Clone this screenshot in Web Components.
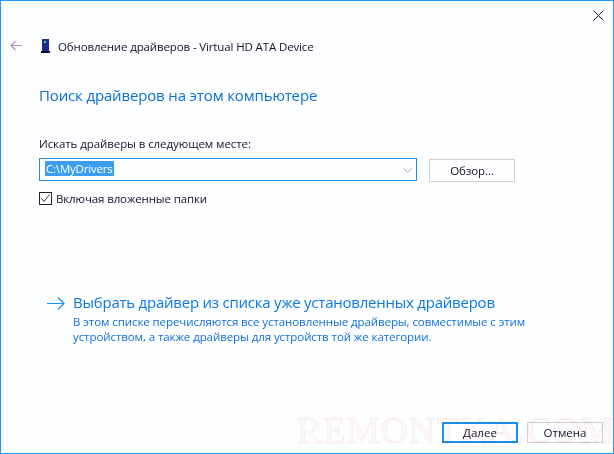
<!DOCTYPE html>
<html>
<head>
<meta charset="utf-8">
<style>
    html, body { margin: 0; padding: 0; }
    body { width: 614px; height: 454px; overflow: hidden; font-family: "Open Sans", "Noto Sans", sans-serif; }
</style>
</head>
<body>
<wizard-window>
    <wizard-header slot="header">Обновление драйверов - Virtual HD ATA Device</wizard-header>
    <h-title slot="content">Поиск драйверов на этом компьютере</h-title>
    <path-picker slot="content" label="Искать драйверы в следующем месте:" value="C:\MyDrivers" check="Включая вложенные папки"></path-picker>
    <command-link slot="content" title="Выбрать драйвер из списка уже установленных драйверов">В этом списке перечисляются все установленные драйверы, совместимые с этим<br>устройством, а также драйверы для устройств той же категории.</command-link>
    <win-button slot="footer" primary>Далее</win-button>
    <win-button slot="footer">Отмена</win-button>
</wizard-window>
<script>
class WizardWindow extends HTMLElement {
    constructor() {
        super()
        this.attachShadow({mode: 'open'}).innerHTML = `
            <style>
                :host {
                    display: flex;
                    flex-direction: column;
                    box-sizing: border-box;
                    position: relative;
                    width: 614px;
                    height: 454px;
                    background: #fcfeff;
                    border: 1px solid #1b9cf2;
                    color: #1a0f2e;
                    overflow: hidden;
                }
                .close { display: flex; justify-content: flex-end; padding: 9px 8px 0 0; height: 11px; }
                .main { flex: 1; display: flex; flex-direction: column; }
                .footer { display: flex; justify-content: flex-end; gap: 9px; padding: 0 10px 10px 0; }
                .mark {
                    position: absolute;
                    left: 296px;
                    top: 410px;
                    font: 37px/40px "Liberation Serif", serif;
                    letter-spacing: 1.2px;
                    color: #fffafa;
                    -webkit-text-stroke: 0.4px #fce0e3;
                    white-space: nowrap;
                    pointer-events: none;
                    mix-blend-mode: multiply;
                }
            </style>
            <div class="close">
                <svg width="12" height="12" viewBox="0 0 12 12"><path d="M.5.5l10 10M10.500.5l-10 10" stroke="#2a1030" fill="none"/></svg>
            </div>
            <slot name="header"></slot>
            <div class="main"><slot name="content"></slot></div>
            <div class="footer"><slot name="footer"></slot></div>
            <div class="mark">REMONTKA.COM</div>
        `
    }
}
window.customElements.define('wizard-window', WizardWindow)

class WizardHeader extends HTMLElement {
    constructor() {
        super()
        this.attachShadow({mode: 'open'}).innerHTML = `
            <style>
                :host { display: flex; align-items: center; height: 18px; margin-top: 16px; padding-left: 9px; font-size: 11.500px; letter-spacing: -.13px; white-space: nowrap; }
                .back { margin: 0 19px 2px 0; }
                .drive { margin-right: 8px; }
            </style>
            <svg class="back" width="12" height="11" viewBox="0 0 12 11"><path d="M12 5.500H1M5.500 1L1 5.500 5.500 10" stroke="#b48fb0" stroke-width="1.200" fill="none"/></svg>
            <svg class="drive" width="9" height="14" viewBox="0 0 9 14">
                <rect x="1" y="0" width="7" height="12" fill="#1f2a8c"/>
                <rect x="3" y="2" width="2" height="2" fill="#3fe05a"/>
                <rect x="0" y="12" width="9" height="2" fill="#0b0b24"/>
            </svg>
            <span><slot></slot></span>
        `
    }
}
window.customElements.define('wizard-header', WizardHeader)

class HTitle extends HTMLElement {
    constructor() {
        super()
        this.attachShadow({mode: 'open'}).innerHTML = `
            <style>
                :host { display: block; margin: 29px 0 0 38px; font-size: 15px; letter-spacing: -.15px; line-height: 22px; color: #0a6fd6; white-space: nowrap; }
            </style>
            <slot></slot>
        `
    }
}
window.customElements.define('h-title', HTitle)

class PathPicker extends HTMLElement {
    constructor() {
        super()
        let label = this.getAttribute('label')
        let value = this.getAttribute('value')
        let check = this.getAttribute('check')
        this.attachShadow({mode: 'open'}).innerHTML = `
            <style>
                :host { display: block; margin: 29px 0 0 38px; font-size: 11.500px; letter-spacing: -.08px; white-space: nowrap; }
                .label { line-height: 18px; height: 18px; }
                .row { display: flex; gap: 12px; margin-top: 5px; }
                .combo {
                    box-sizing: border-box; width: 378px; height: 23px;
                    border: 1px solid #1b8fe8; padding: 2px 4px 0 5px;
                    display: flex; align-items: flex-start; justify-content: space-between;
                }
                .sel { background: #3a9ff0; color: #fff; line-height: 15px; height: 15px; padding: 0 1px; letter-spacing: -.2px; }
                .chev { margin-top: 7px; }
                .browse {
                    box-sizing: border-box; width: 86px; height: 23px; margin-top: 1px;
                    border: 1px solid #cfcfcf; display: flex; align-items: center; justify-content: center;
                }
                .check { display: flex; align-items: center; gap: 4px; margin-top: 9px; height: 14px; letter-spacing: -.13px; }
                .box { box-sizing: border-box; width: 13px; height: 13px; border: 1px solid #2b1a3a; }
                .box svg { display: block; }
            </style>
            <div class="label">${label}</div>
            <div class="row">
                <div class="combo">
                    <span class="sel">${value}</span>
                    <svg class="chev" width="9" height="5" viewBox="0 0 9 5"><path d="M.5.500l4 4 4-4" stroke="#b49ab8" fill="none"/></svg>
                </div>
                <div class="browse">Обзор...</div>
            </div>
            <div class="check">
                <div class="box"><svg width="11" height="11" viewBox="0 0 11 11"><path d="M1.500 5.500l2.500 3L9.500 1.500" stroke="#3a2a4a" fill="none"/></svg></div>
                <span>${check}</span>
            </div>
        `
    }
}
window.customElements.define('path-picker', PathPicker)

class CommandLink extends HTMLElement {
    constructor() {
        super()
        let title = this.getAttribute('title')
        this.attachShadow({mode: 'open'}).innerHTML = `
            <style>
                :host { display: flex; margin: 86px 0 0 46px; color: #0a78e6; white-space: nowrap; }
                svg { margin: 6px 8px 0 0; flex: none; }
                .title { font-size: 15px; letter-spacing: -.23px; line-height: 22px; }
                .desc { font-size: 11.500px; letter-spacing: -.08px; line-height: 15px; color: #0f6fdc; margin-top: 1px; }
            </style>
            <svg width="18" height="13" viewBox="0 0 18 13"><path d="M0 6.500h17M11 .5l6 6-6 6" stroke="#1590f0" stroke-width="1.200" fill="none"/></svg>
            <div>
                <div class="title">${title}</div>
                <div class="desc"><slot></slot></div>
            </div>
        `
    }
}
window.customElements.define('command-link', CommandLink)

class WinButton extends HTMLElement {
    constructor() {
        super()
        this.attachShadow({mode: 'open'}).innerHTML = `
            <style>
                :host {
                    display: flex; align-items: center; justify-content: center;
                    box-sizing: border-box; width: 76px; height: 21px;
                    font-size: 11.500px; border: 1px solid #cfcfcf;
                }
                :host([primary]) { border: 2px solid #1b8fe8; }
            </style>
            <slot></slot>
        `
    }
}
window.customElements.define('win-button', WinButton)
</script>
</body>
</html>
